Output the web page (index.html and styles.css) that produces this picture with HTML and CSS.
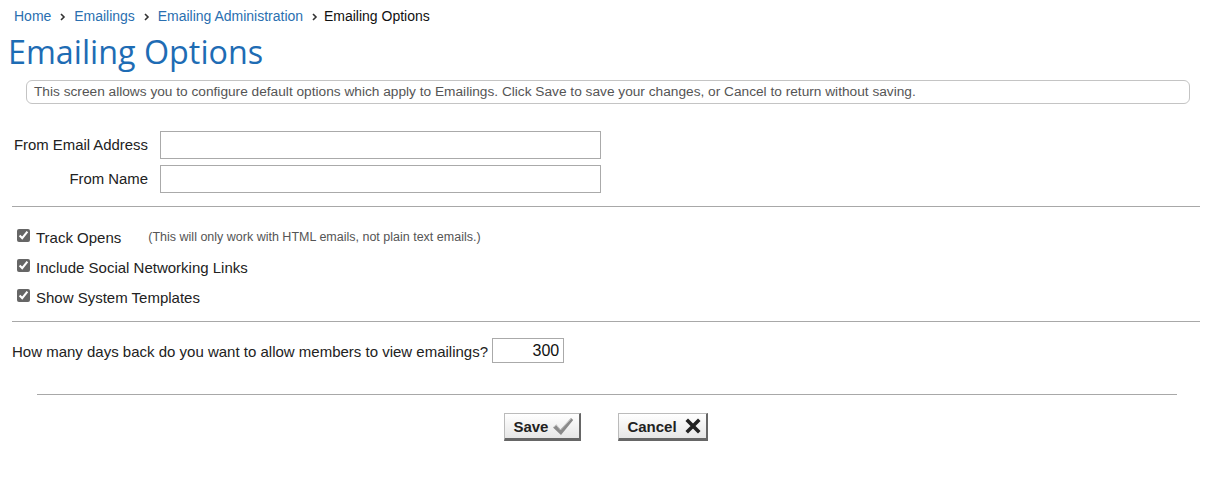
FILE: index.html
```html
<!DOCTYPE html>
<html>
<head>
    <title>Emailing Options</title>
    <link rel="stylesheet" href="styles.css">
</head>
<body>
    <div class="breadcrumb">
        <a href="#">Home</a>
        <span class="sep"><svg width="6" height="8" viewBox="0 0 6 8"><path d="M1 1l3 3-3 3" fill="none" stroke="#333" stroke-width="1.6"/></svg></span>
        <a href="#">Emailings</a>
        <span class="sep"><svg width="6" height="8" viewBox="0 0 6 8"><path d="M1 1l3 3-3 3" fill="none" stroke="#333" stroke-width="1.6"/></svg></span>
        <a href="#">Emailing Administration</a>
        <span class="sep"><svg width="6" height="8" viewBox="0 0 6 8"><path d="M1 1l3 3-3 3" fill="none" stroke="#333" stroke-width="1.6"/></svg></span>
        <span class="current">Emailing Options</span>
    </div>
    <h1>Emailing Options</h1>
    <div class="info">This screen allows you to configure default options which apply to Emailings. Click Save to save your changes, or Cancel to return without saving.</div>

    <div class="fields">
        <div class="field">
            <label>From Email Address</label>
            <input type="text">
        </div>
        <div class="field">
            <label>From Name</label>
            <input type="text">
        </div>
    </div>

    <hr class="rule">

    <div class="checks">
        <label class="check"><input type="checkbox" checked> Track Opens <span class="note">(This will only work with HTML emails, not plain text emails.)</span></label>
        <label class="check"><input type="checkbox" checked> Include Social Networking Links</label>
        <label class="check"><input type="checkbox" checked> Show System Templates</label>
    </div>

    <hr class="rule after-checks">

    <div class="days">
        How many days back do you want to allow members to view emailings?
        <input type="text" value="300">
    </div>

    <hr class="rule short">

    <div class="buttons">
        <button class="btn">Save
            <svg width="22" height="19" viewBox="0 0 22 19"><path d="M1 10.5l3.2-3 4.3 5L19 1l2.2 2L9 18z" fill="#8a8a8a"/><path d="M1.5 10.5l2.7-2.5 4.3 5L19 1.7" fill="none" stroke="#c4c4c4" stroke-width="1"/></svg>
        </button>
        <button class="btn">Cancel
            <svg class="icon-x" width="16" height="16" viewBox="0 0 16 16"><path d="M3 3l10 10M13 3L3 13" stroke="#222" stroke-width="3.6" stroke-linecap="square"/></svg>
        </button>
    </div>
</body>
</html>
```

FILE: styles.css
```css
body {
    margin: 0;
    padding: 0 5px 0 8px;
    font-family: "Liberation Sans", Arial, sans-serif;
    font-size: 14px;
    color: #333;
    background: #fff;
}
.breadcrumb {
    padding: 7px 0 0 6px;
    height: 20px;
    line-height: 18px;
    font-size: 14px;
}
.breadcrumb a {
    color: #2a6fb0;
    text-decoration: none;
}
.breadcrumb .sep {
    display: inline-block;
    margin: 0 4px 0 5px;
}
.breadcrumb .current {
    color: #111;
    margin-left: -2px;
}
h1 {
    margin: 2px 0 0 0;
    font-family: "Open Sans", sans-serif;
    font-weight: 400;
    font-size: 32.3px;
    line-height: 44px;
    color: #1e6cb4;
}
.info {
    margin: 7px 10px 0 18px;
    padding: 3px 7px;
    border: 1px solid #c4c4c4;
    border-radius: 6px;
    font-size: 13.7px;
    line-height: 16px;
    color: #555;
}
.fields {
    margin-top: 27px;
}
.field {
    display: flex;
    align-items: center;
    margin-bottom: 6px;
}
.field label {
    width: 140px;
    text-align: right;
    margin-right: 12px;
    font-size: 14.9px;
    color: #222;
}
.field input {
    width: 435px;
    height: 24px;
    padding: 1px 2px;
    border: 1px solid #aaa;
    font-size: 14px;
}
.rule {
    border: 0;
    border-top: 1px solid #a8a8a8;
    margin: 13px 0 0 4px;
}
.rule.after-checks {
    margin-top: 9px;
}
.rule.short {
    margin: 31px 23px 0 29px;
}
.checks {
    padding: 15px 0 0 9px;
}
.check {
    display: flex;
    align-items: center;
    height: 30px;
    font-size: 15px;
    color: #222;
}
.check input {
    margin: 0 6px 0 0;
    width: 13px;
    height: 13px;
    position: relative;
    top: -2px;
    accent-color: #666;
}
.note {
    margin-left: 27px;
    font-size: 12.5px;
    color: #555;
}
.days {
    margin: 16px 0 0 4px;
    font-size: 15px;
    color: #222;
}
.days input {
    width: 62px;
    height: 21px;
    padding: 1px 4px;
    margin-left: 0;
    border: 1px solid #aaa;
    text-align: right;
    font-family: "Liberation Sans", Arial, sans-serif;
    font-size: 16px;
    color: #111;
    vertical-align: 1px;
}
.buttons {
    display: flex;
    justify-content: center;
    gap: 37px;
    margin-top: 18px;
    padding-left: 4px;
}
.btn {
    display: flex;
    align-items: center;
    gap: 4px;
    height: 28px;
    padding: 0 5px 0 8px;
    border: 1px solid #bbb;
    border-right: 2px solid #666;
    border-bottom: 3px solid #666;
    background: linear-gradient(#fff, #e6e6e6);
    font-family: "Liberation Sans", Arial, sans-serif;
    font-weight: bold;
    font-size: 15px;
    color: #222;
}
.btn .icon-x {
    margin-left: 4px;
}
```
